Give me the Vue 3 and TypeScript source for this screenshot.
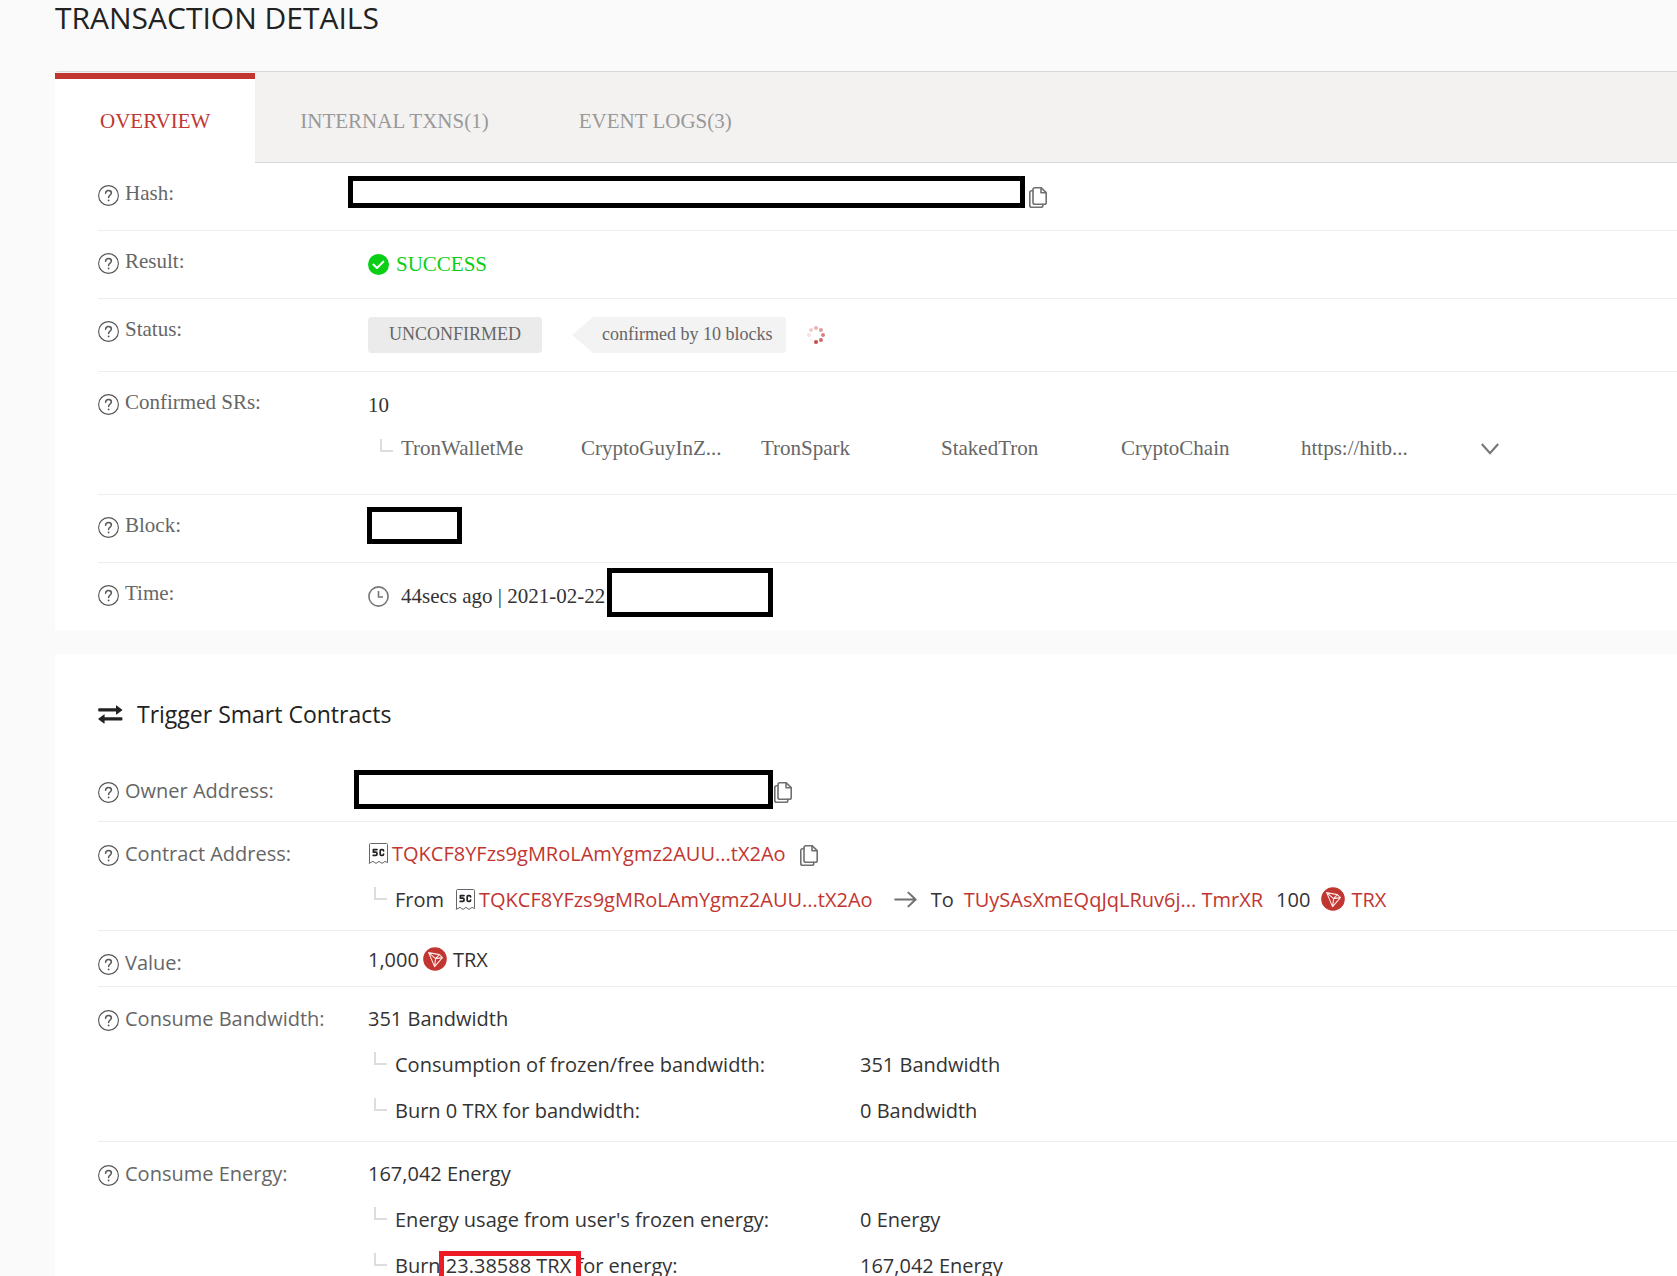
<script setup lang="ts">
import { h, ref, type FunctionalComponent } from 'vue'

const activeTab = ref(0)
const tabs: string[] = ['OVERVIEW', 'INTERNAL TXNS(1)', 'EVENT LOGS(3)']
const representatives: string[] = [
  'TronWalletMe',
  'CryptoGuyInZ...',
  'TronSpark',
  'StakedTron',
  'CryptoChain',
  'https://hitb...',
]
const contract = 'TQKCF8YFzs9gMRoLAmYgmz2AUU...tX2Ao'

// Spinner dots, clockwise from the top, fading behind the leading dot.
const dots = [0.38, 0.5, 0.62, 0.74, 0.9, 0.04, 0.15, 0.26].map((opacity, i) => ({
  opacity,
  cx: 10 + 7 * Math.sin((i * Math.PI) / 4),
  cy: 10 - 7 * Math.cos((i * Math.PI) / 4),
}))

const stroke = { fill: 'none', 'stroke-linecap': 'round', 'stroke-linejoin': 'round' }

const HelpIcon: FunctionalComponent = () =>
  h('svg', { width: 21, height: 21, viewBox: '0 0 21 21', 'aria-hidden': 'true', ...stroke, stroke: '#555' }, [
    h('circle', { cx: 10.5, cy: 10.5, r: 9.9, 'stroke-width': 1.1 }),
    h('path', { d: 'M7.6 8.2C7.7 6.3 8.9 5.4 10.5 5.4C12.2 5.4 13.4 6.4 13.4 7.9C13.4 10 10.6 10.1 10.6 12.6', 'stroke-width': 1.5 }),
    h('circle', { cx: 10.6, cy: 15.4, r: 0.9, fill: '#555', stroke: 'none' }),
  ])

const CopyIcon: FunctionalComponent = () =>
  h('svg', { width: 18, height: 21, viewBox: '0 0 18 21', 'aria-hidden': 'true', ...stroke, stroke: '#707070', 'stroke-width': 1.6 }, [
    h('path', { d: 'M6 0.8H12.2L17.2 5.6V15.4Q17.2 17.2 15.4 17.2H6Q4 17.2 4 15.4V2.8Q4 0.8 6 0.8Z' }),
    h('path', { d: 'M12 1V5.8H17' }),
    h('path', { d: 'M3.8 3.8H2.6Q0.8 3.8 0.8 5.6V18.4Q0.8 20.2 2.6 20.2H12Q13.8 20.2 13.8 18.4V17.4' }),
  ])

const ContractIcon: FunctionalComponent = () =>
  h('svg', { width: 20, height: 21, viewBox: '0 0 20 21', 'aria-hidden': 'true', ...stroke }, [
    h('path', { d: 'M1.5 19.6V1.5Q1.5 0.5 2.5 0.5H18.5Q19.5 0.5 19.5 1.5V19.6L17 18.4L14 20.4L11 18.4L8 20.4L5 18.4L1.5 20.2Z', stroke: '#666', 'stroke-width': 1 }),
    h('path', { d: 'M9 6.6H5.4V9.2H7.8Q9 9.2 9 10.2V11.2Q9 12.4 7.8 12.4H5.2', stroke: '#222', 'stroke-width': 1.7 }),
    h('path', { d: 'M15.6 7.8Q15.6 6.6 14.4 6.6H13.4Q12.2 6.6 12.2 7.8V11.2Q12.2 12.4 13.4 12.4H14.4Q15.6 12.4 15.6 11', stroke: '#222', 'stroke-width': 1.7 }),
  ])

const TronIcon: FunctionalComponent = () =>
  h('svg', { width: 24, height: 24, viewBox: '0 0 24 24', 'aria-hidden': 'true', ...stroke }, [
    h('circle', { cx: 12, cy: 12, r: 11.8, fill: '#c23631' }),
    h('path', { d: 'M5.6 5.6L16.4 7.6L19.4 10.6L11.6 19.6ZM5.6 5.6L12.6 11.6L16.4 7.6M12.6 11.6L19.4 10.6M12.6 11.6L11.6 19.6', stroke: '#fbe9e8', 'stroke-width': 1.1 }),
  ])
</script>

<template>
  <main class="page">
    <h1 class="title">TRANSACTION DETAILS</h1>

    <section class="overview">
      <nav class="tabs" role="tablist">
        <button
          v-for="(tab, i) in tabs"
          :key="tab"
          type="button"
          role="tab"
          class="tab"
          :class="{ active: i === activeTab }"
          :aria-selected="i === activeTab"
          @click="activeTab = i"
        >{{ tab }}</button>
      </nav>

      <dl class="rows">
        <div class="row">
          <dt><HelpIcon /><span>Hash:</span></dt>
          <dd class="covered hash">
            <span class="mask mask-hash"></span>
            <button type="button" class="plain" aria-label="Copy hash"><CopyIcon /></button>
          </dd>
        </div>
        <div class="row">
          <dt><HelpIcon /><span>Result:</span></dt>
          <dd>
            <div class="line success">
              <svg width="21" height="21" viewBox="0 0 21 21" aria-hidden="true">
                <circle cx="10.5" cy="10.5" r="10.5" fill="#0bcf17" />
                <path d="M5.4 10.6L9 14L15.4 7.6" fill="none" stroke="#fff" stroke-width="2" stroke-linecap="round" stroke-linejoin="round" />
              </svg>
              <span>SUCCESS</span>
            </div>
          </dd>
        </div>
        <div class="row status">
          <dt><HelpIcon /><span>Status:</span></dt>
          <dd>
            <span class="badge">UNCONFIRMED</span>
            <span class="callout">confirmed by 10 blocks</span>
            <svg class="spinner" width="20" height="20" viewBox="0 0 20 20" aria-hidden="true">
              <circle v-for="(d, i) in dots" :key="i" :cx="d.cx" :cy="d.cy" r="2" fill="#c23631" :opacity="d.opacity" />
            </svg>
          </dd>
        </div>
        <div class="row confirmed">
          <dt><HelpIcon /><span>Confirmed SRs:</span></dt>
          <dd>
            <div class="line">10</div>
            <div class="line reps">
              <i class="corner"></i>
              <ul>
                <li v-for="name in representatives" :key="name">{{ name }}</li>
              </ul>
              <button type="button" class="plain more" aria-label="Show more">
                <svg width="18" height="12" viewBox="0 0 18 12" aria-hidden="true">
                  <path d="M0.8 1L9 10.2L17.2 1" fill="none" stroke="#777" stroke-width="2.2" />
                </svg>
              </button>
            </div>
          </dd>
        </div>
        <div class="row">
          <dt><HelpIcon /><span>Block:</span></dt>
          <dd class="covered block"><span class="mask mask-block"></span></dd>
        </div>
        <div class="row">
          <dt><HelpIcon /><span>Time:</span></dt>
          <dd>
            <div class="line time">
              <svg width="21" height="21" viewBox="0 0 21 21" fill="none" stroke="#777" aria-hidden="true">
                <circle cx="10.5" cy="10.5" r="9.6" stroke-width="1.6" />
                <path d="M10.5 5V11H15" stroke-width="1.6" />
              </svg>
              <span>44secs ago | 2021-02-22</span>
              <span class="mask mask-time"></span>
            </div>
          </dd>
        </div>
      </dl>
    </section>

    <section class="contracts">
      <h2>
        <svg width="25" height="19" viewBox="0 0 25 19" fill="#222" aria-hidden="true">
          <path d="M1 3.2H18V0.6Q18 0 18.6 0.4L24 4.4Q24.6 4.9 24 5.4L18.6 9.4Q18 9.8 18 9.2V6.6H1Q0.2 6.6 0.2 5.8V4Q0.2 3.2 1 3.2Z" />
          <path d="M23.6 12.2H6.6V9.6Q6.6 9 6 9.4L0.6 13.4Q0 13.9 0.6 14.4L6 18.4Q6.6 18.8 6.6 18.2V15.6H23.6Q24.4 15.6 24.4 14.8V13Q24.4 12.2 23.6 12.2Z" />
        </svg>
        <span>Trigger Smart Contracts</span>
      </h2>

      <dl class="rows">
        <div class="row owner">
          <dt><HelpIcon /><span>Owner Address:</span></dt>
          <dd class="covered">
            <span class="mask mask-owner"></span>
            <button type="button" class="plain" aria-label="Copy owner address"><CopyIcon /></button>
          </dd>
        </div>
        <div class="row">
          <dt><HelpIcon /><span>Contract Address:</span></dt>
          <dd>
            <div class="line">
              <ContractIcon /><a href="#" class="address">{{ contract }}</a>
              <button type="button" class="plain copy" aria-label="Copy contract address"><CopyIcon /></button>
            </div>
            <div class="line sub">
              <i class="corner"></i>
              <span class="from">From</span>
              <ContractIcon /><a href="#" class="address">{{ contract }}</a>
              <svg class="arrow" width="23" height="17" viewBox="0 0 23 17" fill="none" stroke="#707070" stroke-width="2" stroke-linecap="round" stroke-linejoin="round" aria-hidden="true">
                <path d="M1.2 8.5H21.4M14.4 1.6L21.6 8.5L14.4 15.4" />
              </svg>
              <span>To</span>
              <a href="#" class="target">TUySAsXmEQqJqLRuv6j... TmrXR</a>
              <span class="amount">100</span>
              <TronIcon />
              <a href="#" class="unit">TRX</a>
            </div>
          </dd>
        </div>
        <div class="row value">
          <dt><HelpIcon /><span>Value:</span></dt>
          <dd>
            <div class="line"><span class="sum">1,000</span><TronIcon /><span class="unit">TRX</span></div>
          </dd>
        </div>
        <div class="row">
          <dt><HelpIcon /><span>Consume Bandwidth:</span></dt>
          <dd>
            <div class="line">351 Bandwidth</div>
            <div class="line sub">
              <i class="corner"></i><span class="item">Consumption of frozen/free bandwidth:</span><span>351 Bandwidth</span>
            </div>
            <div class="line sub">
              <i class="corner"></i><span class="item">Burn 0 TRX for bandwidth:</span><span>0 Bandwidth</span>
            </div>
          </dd>
        </div>
        <div class="row">
          <dt><HelpIcon /><span>Consume Energy:</span></dt>
          <dd>
            <div class="line">167,042 Energy</div>
            <div class="line sub">
              <i class="corner"></i><span class="item">Energy usage from user's frozen energy:</span><span>0 Energy</span>
            </div>
            <div class="line sub">
              <i class="corner"></i><span class="item">Burn <span class="marked">23.38588 TRX</span> for energy:</span><span>167,042 Energy</span>
            </div>
          </dd>
        </div>
      </dl>
    </section>
  </main>
</template>

<style>
body {
  background: #fafafa;
}
</style>

<style scoped>
.page {
  box-sizing: border-box;
  height: 100vh;
  overflow: hidden;
  padding-left: 55px;
  color: #333;
  font: 20px/24px "Segoe UI", "Open Sans", "Noto Sans", sans-serif;
}
.title {
  height: 71px;
  margin: 0;
  color: #222;
  font-size: 30px;
  font-weight: 400;
  line-height: 36px;
}
svg {
  display: block;
  flex: none;
}
a {
  color: #c23631;
  text-decoration: none;
}
.overview {
  margin-bottom: 24px;
  background: #fff;
  font-family: "Liberation Serif", "Times New Roman", serif;
  font-size: 21px;
}
.tabs {
  display: flex;
  box-sizing: border-box;
  height: 92px;
  border: solid #d8d8d8;
  border-width: 1px 0;
  border-top-left-radius: 3px;
  background: #f3f2f1;
}
.tab {
  padding: 7px 45px 0;
  border: 0;
  background: none;
  color: #999;
  font: inherit;
  cursor: pointer;
}
.tab.active {
  margin: 1px 0 -1px;
  border-top: 6px solid #c23631;
  padding-top: 0;
  background: #fff;
  color: #c23631;
}
.rows {
  margin: 0 0 0 43px;
}
.row {
  display: flex;
  box-sizing: border-box;
  min-height: 68px;
  padding-top: 18px;
  border-bottom: 1px solid #eee;
}
.overview .row:last-child {
  min-height: 67px;
  border-bottom: 0;
}
dt {
  display: flex;
  flex: none;
  gap: 6px;
  width: 270px;
  height: 24px;
  color: #666;
}
dt svg {
  margin-top: 4px;
}
dd {
  flex: 1;
  min-width: 0;
  margin: 0;
  padding-top: 3px;
}
.line {
  display: flex;
  align-items: center;
  height: 24px;
  white-space: nowrap;
}
.plain {
  padding: 0;
  border: 0;
  background: none;
  cursor: pointer;
}
.success {
  gap: 7px;
  color: #0bcf17;
}
.covered {
  display: flex;
  align-items: flex-start;
}
.mask {
  box-sizing: border-box;
  flex: none;
  border: 5px solid #000;
  background: #fff;
}
.covered .mask {
  margin-top: -9px;
}
.hash {
  margin-left: -20px;
  gap: 4px;
}
.covered.hash .mask {
  margin-top: -8px;
}
.hash .plain,
.owner .plain {
  margin-top: 3px;
}
.block {
  margin-left: -1px;
}
.mask-hash {
  width: 677px;
  height: 32px;
}
.mask-block {
  width: 95px;
  height: 37px;
}
.mask-time {
  width: 166px;
  height: 49px;
  margin: -8px 0 0 2px;
}
.mask-owner {
  width: 419px;
  height: 39px;
}
.status {
  min-height: 73px;
}
.status dd {
  display: flex;
  padding: 0;
  color: #666;
  font-size: 18px;
  line-height: 34px;
}
.badge {
  width: 174px;
  height: 36px;
  border-radius: 4px;
  background: #ebebeb;
  text-align: center;
}
.callout {
  box-sizing: border-box;
  width: 214px;
  height: 36px;
  margin-left: 30px;
  padding-left: 30px;
  border-radius: 3px;
  background: #f3f3f3;
  clip-path: polygon(0 50%, 21px 0, 100% 0, 100% 100%, 21px 100%);
}
.spinner {
  margin: 8px 0 0 20px;
}
.confirmed {
  min-height: 123px;
}
.reps {
  margin-top: 19px;
  padding-left: 12px;
  color: #666;
}
.reps ul {
  display: flex;
  margin: 0;
  padding: 0;
  list-style: none;
}
.reps li {
  width: 180px;
}
.more {
  margin-top: 2px;
}
.corner {
  box-sizing: border-box;
  flex: none;
  width: 13px;
  height: 13px;
  margin: -14px 8px 0 0;
  border: solid #ddd;
  border-width: 0 0 2px 2px;
}
.reps .corner {
  margin-top: -6px;
}
.time {
  gap: 12px;
}
.time .mask {
  margin-left: -10px;
}
.contracts {
  padding-top: 46px;
  background: #fff;
}
h2 {
  display: flex;
  align-items: center;
  gap: 14px;
  height: 28px;
  margin: 0 0 32px 43px;
  color: #222;
  font-size: 23px;
  font-weight: 400;
}
.contracts .row {
  min-height: 56px;
  padding: 20px 0 18px;
}
.contracts dt svg {
  margin-top: 3px;
}
.contracts .line > svg {
  margin-bottom: 2px;
}
.contracts dd {
  padding: 0;
}
.contracts .row.owner {
  padding: 19px 0 18px;
}
.owner .covered {
  height: 24px;
  margin-left: -14px;
  gap: 1px;
}
.contracts .row.value {
  padding: 17px 0 11px;
}
.value dt {
  margin-top: 3px;
}
.address {
  margin-left: 4px;
}
.copy {
  margin: 2px 0 0 14px;
}
.sub {
  margin-top: 22px;
  padding-left: 6px;
}
.from {
  margin-right: 11px;
}
.arrow {
  margin: 0 14px 0 21px;
}
.target {
  margin: 0 13px 0 10px;
}
.amount {
  margin-right: 11px;
}
.sum {
  margin-right: 4px;
}
.unit {
  margin-left: 6px;
}
.item {
  width: 465px;
}
.marked {
  position: relative;
}
.marked::after {
  position: absolute;
  inset: -1px -10px -5px -7px;
  border: 5px solid #ed1c24;
  content: "";
}
</style>
